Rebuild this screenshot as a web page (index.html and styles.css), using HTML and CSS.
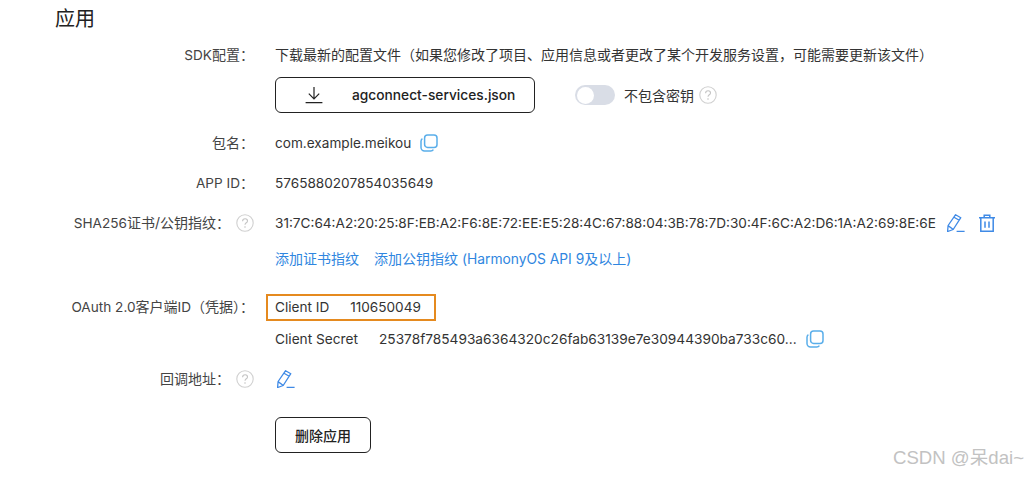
FILE: index.html
```html
<!DOCTYPE html>
<html lang="zh-CN">
<head>
    <meta charset="UTF-8">
    <title>应用</title>
    <link rel="stylesheet" href="styles.css">
</head>
<body>
    <svg class="defs" width="0" height="0">
        <symbol id="i-copy" viewBox="0 0 18 18">
            <rect x="4.6" y="1" width="12.4" height="12.4" rx="3" fill="none" stroke="currentColor" stroke-width="1.5"/>
            <path d="M2.4 4.6C1.5 5.2 1 6.1 1 7.2v6.3C1 15.4 2.6 17 4.5 17h6.3c1.1 0 2-.5 2.6-1.4" fill="none" stroke="currentColor" stroke-width="1.5"/>
        </symbol>
        <symbol id="i-edit" viewBox="0 0 18 18">
            <path d="M8.6 .7l5.2 3-7.6 11.8-5.6 2 .5-6z M7 3.2l5.2 3.1 M1 11.6l5 3.6" fill="none" stroke="currentColor" stroke-width="1.3" stroke-linejoin="round"/>
            <path d="M9.6 17.4h8" stroke="currentColor" stroke-width="1.3"/>
        </symbol>
        <symbol id="i-help" viewBox="0 0 18 18">
            <circle cx="9" cy="9" r="8.2" fill="none" stroke="#d0d0d0" stroke-width="1.1"/>
            <path d="M6.6 7.2c0-1.5 1.1-2.4 2.5-2.4s2.4.9 2.4 2.1c0 1.9-2.5 1.9-2.5 3.9" fill="none" stroke="#c4c4c4" stroke-width="1.1"/>
            <circle cx="9" cy="13" r=".8" fill="#c4c4c4"/>
        </symbol>
    </svg>

    <div class="page">
        <h2 class="title">应用</h2>

        <div class="row row-sdk">
            <div class="label"><span class="en">SDK</span>配置：</div>
            <div class="value">
                <div class="line">下载最新的配置文件（如果您修改了项目、应用信息或者更改了某个开发服务设置，可能需要更新该文件）</div>
                <div class="download">
                    <button class="btn btn-file">
                        <svg class="i-down" width="18" height="18" viewBox="0 0 18 18"><path d="M9 1v11.5M3.8 7.6L9 12.8l5.2-5.2M.6 16.6h16.8" fill="none" stroke="#222" stroke-width="1.2"/></svg>
                        <span class="en">agconnect-services.json</span>
                    </button>
                    <span class="switch"><span class="knob"></span></span>
                    <span class="switch-text">不包含密钥</span>
                    <svg class="icon help-s"><use href="#i-help"/></svg>
                </div>
            </div>
        </div>

        <div class="row">
            <div class="label">包名：</div>
            <div class="value line"><span class="en">com.example.meikou</span><svg class="icon copy"><use href="#i-copy"/></svg></div>
        </div>

        <div class="row">
            <div class="label"><span class="en">APP ID</span>：</div>
            <div class="value line"><span class="en">5765880207854035649</span></div>
        </div>

        <div class="row row-sha">
            <div class="label"><span class="en">SHA256</span>证书/公钥指纹：<svg class="icon help"><use href="#i-help"/></svg></div>
            <div class="value">
                <div class="line"><span class="en">31:7C:64:A2:20:25:8F:EB:A2:F6:8E:72:EE:E5:28:4C:67:88:04:3B:78:7D:30:4F:6C:A2:D6:1A:A2:69:8E:6E</span><svg class="icon edit edit-sha"><use href="#i-edit"/></svg><svg class="icon trash" viewBox="0 0 18 18"><path d="M1 3.8h16M6.2 3.8V1.2h5.6v2.6M2.8 3.8v13.4h12.4V3.8M7 7.4v6.4M11 7.4v6.4" fill="none" stroke="currentColor" stroke-width="1.5"/></svg></div>
                <div class="links line">
                    <a class="link">添加证书指纹</a>
                    <a class="link">添加公钥指纹 <span class="en">(HarmonyOS API 9</span>及以上)</a>
                </div>
            </div>
        </div>

        <div class="row row-oauth">
            <div class="label"><span class="en">OAuth 2.0</span>客户端<span class="en">ID</span>（凭据）：</div>
            <div class="value">
                <div class="mark en">Client ID<span class="client-id">110650049</span></div>
                <div class="line secret"><span class="en">Client Secret</span><span class="client-secret en">25378f785493a6364320c26fab63139e7e30944390ba733c60...</span><svg class="icon copy"><use href="#i-copy"/></svg></div>
            </div>
        </div>

        <div class="row">
            <div class="label">回调地址：<svg class="icon help"><use href="#i-help"/></svg></div>
            <div class="value line"><svg class="icon edit edit-cb"><use href="#i-edit"/></svg></div>
        </div>

        <div class="row row-del">
            <div class="label"></div>
            <div class="value"><button class="btn btn-del">删除应用</button></div>
        </div>
    </div>

    <div class="watermark">CSDN @呆dai~</div>
</body>
</html>
```

FILE: styles.css
```css
*{
    margin:0;
    padding:0;
    box-sizing:border-box;
}
html,body{
    width:100%;
    height:100%;
    background:#fff;
    overflow:hidden;
}
body{
    font-family:Inter,"Noto Sans CJK SC",sans-serif;
    font-size:14px;
    color:#333;
    position:relative;
}
.defs{
    position:absolute;
}
.en{
    font-size:13.6px;
}
.page{
    padding-top:7px;
}
.title{
    font-size:20px;
    font-weight:400;
    line-height:24px;
    margin-left:55px;
    color:#222;
    margin-bottom:14px;
}
.row{
    display:grid;
    grid-template-columns:254px 1fr;
    column-gap:21px;
    margin-bottom:20px;
}
.label{
    height:20px;
    line-height:20px;
    color:#444;
    display:flex;
    justify-content:flex-end;
    align-items:center;
    white-space:nowrap;
}
.line{
    height:20px;
    line-height:20px;
    display:flex;
    align-items:center;
    white-space:nowrap;
}
.icon{
    width:18px;
    height:18px;
    flex:none;
}
.help{
    margin-left:6px;
}
.help-s{
    margin-left:5px;
}
.copy{
    color:#5aaeea;
    margin-left:9px;
}
.edit{
    color:#3f8ae6;
}
.edit-sha{
    margin-left:11px;
}
.edit-cb{
    margin-left:2px;
}
.trash{
    color:#3f8ae6;
    margin-left:13px;
}
.btn{
    font-family:inherit;
    font-size:14px;
    font-weight:500;
    color:#222;
    background:#fff;
    border:1px solid #222;
    border-radius:6px;
    height:36px;
}
.btn .en{
    font-size:13.75px;
}
.download{
    display:flex;
    align-items:center;
    margin-top:12px;
}
.btn-file{
    width:260px;
    display:flex;
    align-items:center;
    padding-left:29px;
}
.i-down{
    margin-right:29px;
}
.switch{
    width:40px;
    height:20px;
    border-radius:10px;
    background:#d9dde6;
    margin-left:40px;
    padding:1.5px;
    display:block;
}
.knob{
    display:block;
    width:17px;
    height:17px;
    border-radius:50%;
    background:#fff;
}
.switch-text{
    margin-left:9px;
}
.row-sha .links{
    margin-top:16px;
}
.link{
    color:#2f86e0;
    margin-right:15px;
}
.link .en{
    font-size:13.8px;
}
.row-sha{
    margin-bottom:25px;
}
.mark{
    width:170px;
    height:27px;
    margin-left:-9px;
    padding:0 0 1px 7px;
    border:2px solid #e58a1f;
    display:flex;
    align-items:center;
    white-space:nowrap;
}
.client-id{
    margin-left:21px;
}
.secret{
    margin-top:8px;
}
.secret .en{
    font-size:13.7px;
}
.client-secret{
    margin-left:21px;
}
.row-oauth .label{
    margin-top:3px;
}
.row-del{
    margin-top:28px;
    margin-bottom:0;
}
.btn-del{
    width:96px;
}
.watermark{
    position:absolute;
    right:3px;
    bottom:8px;
    font-family:"Liberation Sans","Noto Sans CJK SC",sans-serif;
    font-size:18.6px;
    color:#c2c2c2;
}
```
